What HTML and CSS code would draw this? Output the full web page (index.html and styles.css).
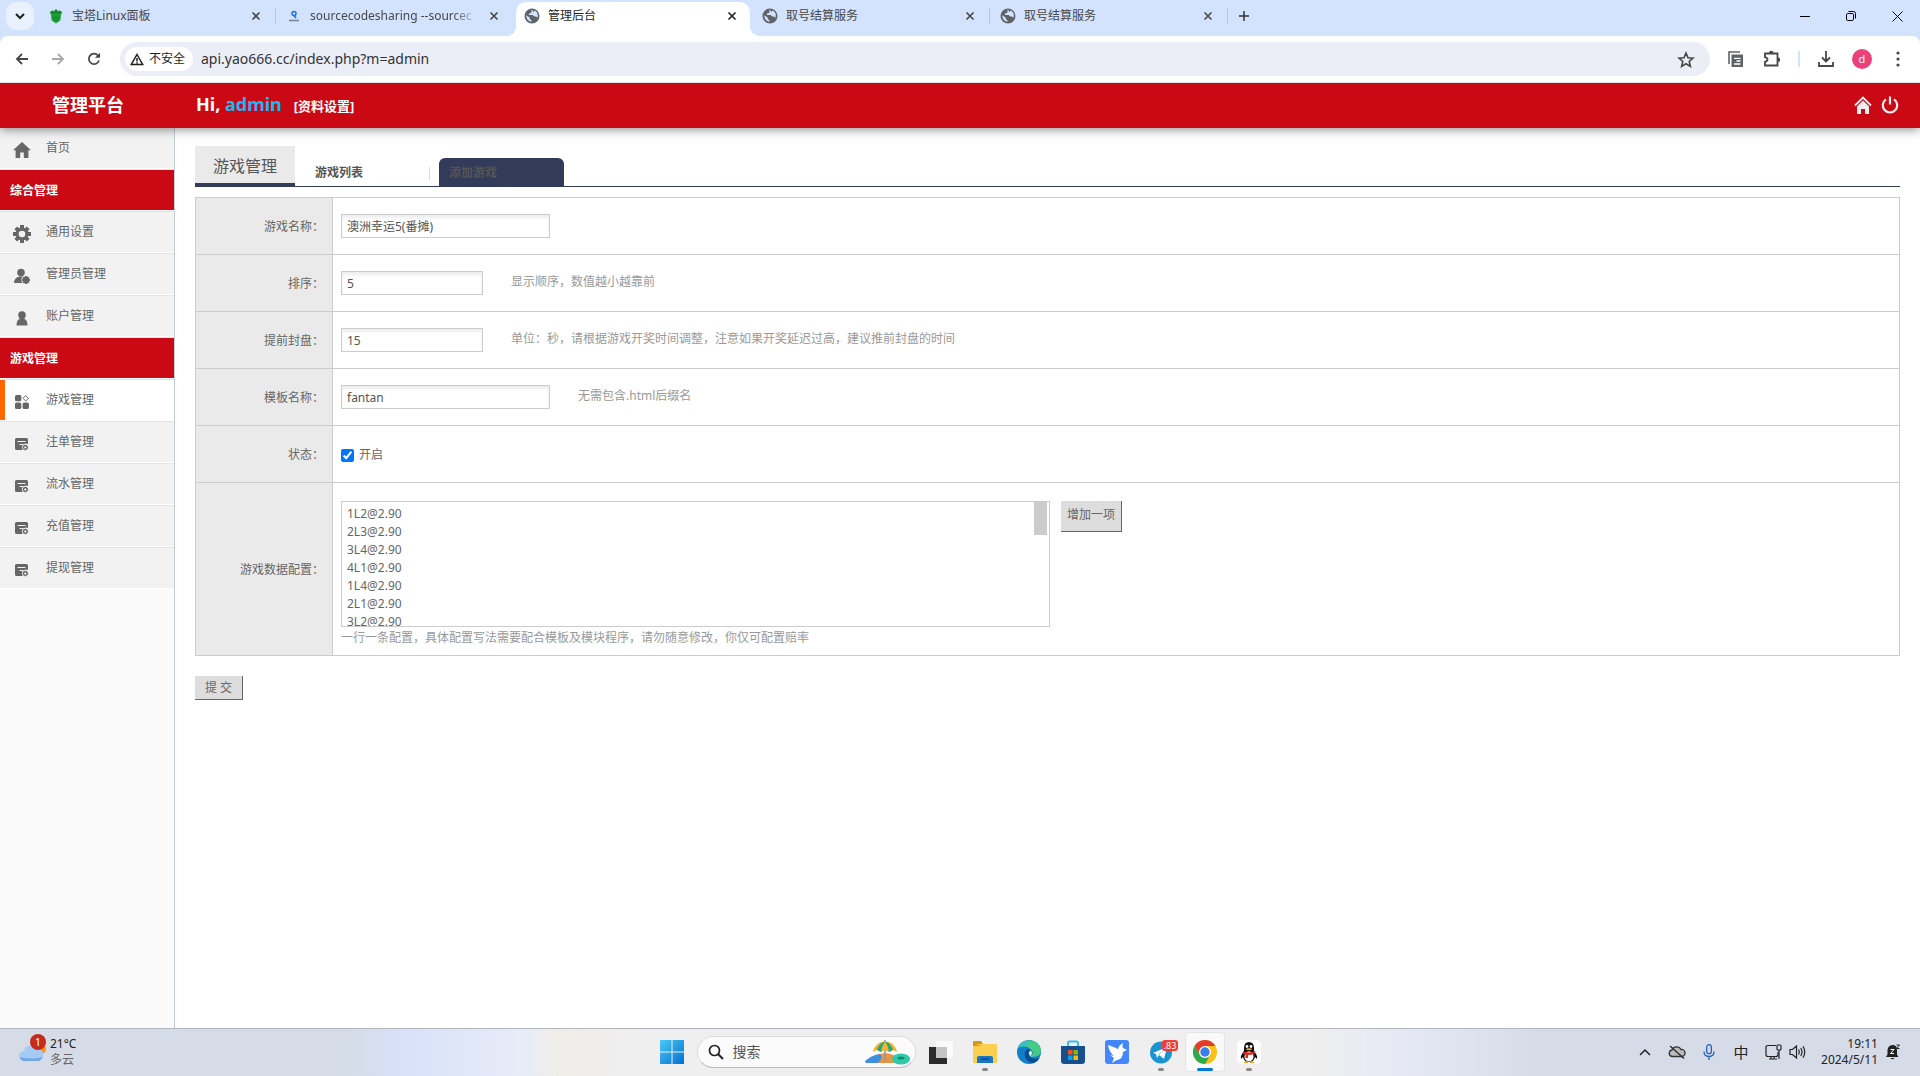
FILE: index.html
```html
<!DOCTYPE html>
<html lang="zh-CN">
<head>
  <meta charset="UTF-8">
  <meta name="viewport" content="width=device-width, initial-scale=1.0">
  <title>管理后台</title>
  <link rel="stylesheet" href="styles.css">
</head>
<body>
  <svg class="defs" aria-hidden="true">
    <symbol id="i-close" viewBox="0 0 10 10"><path d="M1.5 1.5l7 7M8.500 1.500l-7 7" fill="none" stroke="currentColor" stroke-width="1.600"/></symbol>
    <symbol id="i-globe" viewBox="0 0 16 16"><circle cx="8" cy="8" r="7.500" fill="#5f6368"/><path d="M2.300 7.300l3.500 2.400v1.200l1.700 1.500v1.300C4.600 13.500 2.200 11 2.300 7.300zM6.500 2.400L8 3.600 6.400 5.200l-1.500.4v1.300h3.700l1.700 1.600h1.700l1.400 1.300c1.200-3 0-6.200-2.900-7.400L9.200 4.200 8.700 2.200z" fill="#d3e3fd"/></symbol>
    <symbol id="i-home" viewBox="0 0 18 16"><path d="M9 0L0 8.200h2.600V16h4.600v-5.500h3.600V16h4.600V8.200H18z" fill="#666"/></symbol>
    <symbol id="i-list" viewBox="0 0 14 14"><path d="M1.500 1h10q1.500 0 1.500 1.500V7a4 4 0 0 0-5 6H1.500Q0 13 0 11.500v-9Q0 1 1.500 1z" fill="#666"/><path d="M2.500 4.500h8M4.500 7.500h4" stroke="#f2f2f2" stroke-width="1.200"/><path d="M10.300 7.400a3 3 0 1 0 .1 0zM10.300 9v3M9 10.500h2.600" fill="#666" stroke="#f2f2f2" stroke-width=".8"/></symbol>
  </svg>

  <div class="browser">
    <!-- 浏览器标签栏 -->
    <div class="tabstrip">
      <button class="tab-search" aria-label="搜索标签页"><svg width="10" height="7" viewBox="0 0 10 7"><path d="M1 1l4 4 4-4" fill="none" stroke="#1f1f1f" stroke-width="2"/></svg></button>
      <div class="tab">
        <svg width="16" height="16" viewBox="0 0 16 16"><path d="M2.500 5h11l-1.200 7.500L8 15.500l-4.300-3z" fill="#20a53a"/><path d="M1.500 4.500L4 2.500l2 .5 2-2 2 2 2-.5 2.500 2-2.500 1.500h-8z" fill="#1a8a30"/><path d="M6 7v6M8 7v7M10 7v6M4 9.500h8" stroke="#147327" stroke-width=".6"/></svg>
        <span class="tab-title">宝塔Linux面板</span>
        <button class="tab-close" aria-label="关闭"><svg width="10" height="10"><use href="#i-close"/></svg></button>
      </div>
      <div class="tab plain">
        <svg width="16" height="16" viewBox="0 0 16 16"><circle cx="8" cy="5.500" r="2" fill="none" stroke="#1a73e8" stroke-width="1.500"/><path d="M8 7.500l2 2.500" stroke="#1a73e8" stroke-width="1.700"/><path d="M3 12.500h10" stroke="#7d8794" stroke-width="1.600"/></svg>
        <span class="tab-title fade">sourcecodesharing --sourcec</span>
        <button class="tab-close" aria-label="关闭"><svg width="10" height="10"><use href="#i-close"/></svg></button>
      </div>
      <div class="tab active">
        <svg width="16" height="16"><use href="#i-globe"/></svg>
        <span class="tab-title">管理后台</span>
        <button class="tab-close" aria-label="关闭"><svg width="10" height="10"><use href="#i-close"/></svg></button>
      </div>
      <div class="tab">
        <svg width="16" height="16"><use href="#i-globe"/></svg>
        <span class="tab-title">取号结算服务</span>
        <button class="tab-close" aria-label="关闭"><svg width="10" height="10"><use href="#i-close"/></svg></button>
      </div>
      <div class="tab">
        <svg width="16" height="16"><use href="#i-globe"/></svg>
        <span class="tab-title">取号结算服务</span>
        <button class="tab-close" aria-label="关闭"><svg width="10" height="10"><use href="#i-close"/></svg></button>
      </div>
      <button class="new-tab" aria-label="新标签页"><svg width="12" height="12" viewBox="0 0 12 12"><path d="M6 1v10M1 6h10" stroke="#333" stroke-width="1.500"/></svg></button>
      <div class="win-ctrl">
        <button aria-label="最小化"><svg width="10" height="10" viewBox="0 0 10 10"><path d="M0 5.500h10" stroke="#000"/></svg></button>
        <button aria-label="还原"><svg width="10" height="10" viewBox="0 0 10 10"><rect x=".5" y="2.500" width="7" height="7" rx="1.300" fill="none" stroke="#000"/><path d="M2.500 .5H7.500q2 0 2 2v5" fill="none" stroke="#000"/></svg></button>
        <button aria-label="关闭窗口"><svg width="11" height="11" viewBox="0 0 11 11"><path d="M.5 .5l10 10M10.500 .5l-10 10" stroke="#000"/></svg></button>
      </div>
    </div>

    <!-- 地址栏 -->
    <div class="toolbar">
      <button class="tool" aria-label="后退"><svg width="14" height="12" viewBox="0 0 14 12"><path d="M13 6H2M7 1L2 6l5 5" fill="none" stroke="#474747" stroke-width="1.800"/></svg></button>
      <button class="tool" aria-label="前进"><svg width="14" height="12" viewBox="0 0 14 12"><path d="M1 6h11M7 1l5 5-5 5" fill="none" stroke="#a8a8a8" stroke-width="1.800"/></svg></button>
      <button class="tool" aria-label="重新加载"><svg width="14" height="14" viewBox="0 0 14 14"><path d="M12 8.500a5.200 5.200 0 1 1-1-5" fill="none" stroke="#474747" stroke-width="1.800"/><path d="M13 .8v5H8z" fill="#474747"/></svg></button>
      <div class="omnibox">
        <button class="chip"><svg width="14" height="13" viewBox="0 0 14 13"><path d="M7 1.500l5.700 10H1.300zM7 5v3.500M7 9.200v1.400" fill="none" stroke="#1f1f1f" stroke-width="1.500"/></svg>不安全</button>
        <input class="url" type="text" aria-label="地址" value="api.yao666.cc/index.php?m=admin">
        <button class="star" aria-label="收藏"><svg width="18" height="17" viewBox="0 0 18 17"><path d="M9 2l2 4.800 5 .4-3.800 3.300 1.200 4.900L9 12.800l-4.400 2.600 1.200-4.900L2 7.200l5-.4z" fill="none" stroke="#474747" stroke-width="1.600"/></svg></button>
      </div>
      <button class="tool" aria-label="阅读清单"><svg width="16" height="16" viewBox="0 0 16 16"><path d="M1 13V1h11" fill="none" stroke="#5f6368" stroke-width="1.600"/><path d="M3.500 3.500H15V16H3.500z" fill="#5f6368"/><path d="M6 7.300h6.500M6 13h6.500M8.500 10h4" stroke="#fff" stroke-width="1.300"/></svg></button>
      <button class="tool" aria-label="扩展程序"><svg width="18" height="18" viewBox="0 0 18 18"><path d="M2 3.500h12.500V15.500H2v-3.700q2.500-.6 2.500-2.300T2 7.200z" fill="none" stroke="#474747" stroke-width="1.800"/><path d="M6 3a2.200 2.200 0 0 1 4.400 0zM15 7.500a2.200 2.200 0 0 1 0 4.400z" fill="#474747"/></svg></button>
      <span class="tool-sep"></span>
      <button class="tool" aria-label="下载"><svg width="16" height="16" viewBox="0 0 16 16"><path d="M8 0v10M4 6.500l4 4 4-4M1 11v4h14v-4" fill="none" stroke="#474747" stroke-width="1.800"/></svg></button>
      <button class="tool" aria-label="用户"><span class="avatar">d</span></button>
      <button class="tool" aria-label="菜单"><svg width="4" height="16" viewBox="0 0 4 16"><g fill="#474747"><circle cx="2" cy="2" r="1.600"/><circle cx="2" cy="8" r="1.600"/><circle cx="2" cy="14" r="1.600"/></g></svg></button>
    </div>
  </div>

  <header class="header">
    <div class="logo">管理平台</div>
    <div class="hello">Hi, <span class="user">admin</span><a href="#">[资料设置]</a></div>
    <div class="header-icons">
      <a href="#" aria-label="首页"><svg width="18" height="18" viewBox="0 0 18 18"><path d="M1 9.500l8-8 8 8" fill="none" stroke="#eee" stroke-width="1.800"/><path d="M9 4.600l6 6V18h-4v-5H7v5H3v-7.400z" fill="#eee"/></svg></a>
      <a href="#" aria-label="退出"><svg width="18" height="18" viewBox="0 0 18 18"><path d="M5 3.300a7.200 7.200 0 1 0 8 0M9 .5v8" fill="none" stroke="#eee" stroke-width="2.200"/></svg></a>
    </div>
  </header>

  <div class="wrap">
    <nav class="sidebar">
      <a class="item" href="#"><svg width="18" height="16"><use href="#i-home"/></svg>首页</a>
      <h3 class="group">综合管理</h3>
      <a class="item" href="#"><svg width="18" height="18" viewBox="0 0 18 18"><g stroke="#666" stroke-width="4"><path d="M9 0v18M0 9h18M2.800 2.800l12.400 12.400M15.200 2.800L2.800 15.200"/></g><circle cx="9" cy="9" r="6.500" fill="#666"/><circle cx="9" cy="9" r="3.300" fill="#f2f2f2"/></svg>通用设置</a>
      <a class="item" href="#"><svg width="18" height="18" viewBox="0 0 18 18"><circle cx="8" cy="5.500" r="3.800" fill="#666"/><path d="M1 16q0-5 5-6.500h4l1 6.500z" fill="#666"/><circle cx="13" cy="13" r="4.600" fill="#f2f2f2"/><path d="M13 9v8M9 13h8M10.200 10.200l5.600 5.600M15.800 10.200l-5.600 5.600" stroke="#666" stroke-width="2.200"/></svg>管理员管理</a>
      <a class="item" href="#"><svg width="18" height="18" viewBox="0 0 18 18"><circle cx="9" cy="6" r="3.800" fill="#666"/><path d="M6.500 8h5v2q3 1 3 6.500H3.500q0-5.500 3-6.500z" fill="#666"/></svg>账户管理</a>
      <h3 class="group">游戏管理</h3>
      <a class="item current" href="#"><svg width="14" height="14" viewBox="0 0 14 14"><g fill="#666"><rect width="6.300" height="6.300" rx="1.500"/><rect y="7.600" width="6.300" height="6.300" rx="1.500"/><rect x="7.600" y="7.600" width="6.300" height="6.300" rx="1.500"/></g><path d="M10.700 .6l2.700 2.700L10.700 6 8 3.300z" fill="none" stroke="#666"/></svg>游戏管理</a>
      <a class="item" href="#"><svg width="14" height="14"><use href="#i-list"/></svg>注单管理</a>
      <a class="item" href="#"><svg width="14" height="14"><use href="#i-list"/></svg>流水管理</a>
      <a class="item" href="#"><svg width="14" height="14"><use href="#i-list"/></svg>充值管理</a>
      <a class="item" href="#"><svg width="14" height="14"><use href="#i-list"/></svg>提现管理</a>
    </nav>

    <main class="content">
      <div class="page-head">
        <h2>游戏管理</h2>
        <a class="page-tab" href="#">游戏列表</a>
        <a class="page-tab on" href="#">添加游戏</a>
      </div>

      <form>
        <table class="form">
          <tr>
            <th><label for="name">游戏名称：</label></th>
            <td><input class="text" type="text" id="name" value="澳洲幸运5(番摊)"></td>
          </tr>
          <tr>
            <th><label for="sort">排序：</label></th>
            <td><input class="text short" type="text" id="sort" value="5"><span class="tip">显示顺序，数值越小越靠前</span></td>
          </tr>
          <tr>
            <th><label for="ahead">提前封盘：</label></th>
            <td><input class="text short" type="text" id="ahead" value="15"><span class="tip">单位：秒，请根据游戏开奖时间调整，注意如果开奖延迟过高，建议推前封盘的时间</span></td>
          </tr>
          <tr>
            <th><label for="tpl">模板名称：</label></th>
            <td><input class="text" type="text" id="tpl" value="fantan"><span class="tip">无需包含.html后缀名</span></td>
          </tr>
          <tr>
            <th>状态：</th>
            <td><label class="check"><input type="checkbox" checked>开启</label></td>
          </tr>
          <tr class="data">
            <th><label for="data">游戏数据配置：</label></th>
            <td>
              <div class="data-row">
                <div class="area">
                  <textarea id="data">1L2@2.90
2L3@2.90
3L4@2.90
4L1@2.90
1L4@2.90
2L1@2.90
3L2@2.90</textarea>
                  <span class="thumb"></span>
                </div>
                <button type="button" class="btn add">增加一项</button>
              </div>
              <p class="note">一行一条配置，具体配置写法需要配合模板及模块程序，请勿随意修改，你仅可配置赔率</p>
            </td>
          </tr>
        </table>
        <button type="button" class="btn submit">提 交</button>
      </form>
    </main>
  </div>

  <!-- 任务栏 -->
  <footer class="taskbar">
    <div class="weather">
      <svg width="28" height="30" viewBox="0 0 28 30"><circle cx="23" cy="16" r="5" fill="#f5931f"/><path d="M6 28a5 5 0 0 1 0-10 7 7 0 0 1 13-2 6 6 0 0 1 1 12z" fill="#a5cbf5"/><path d="M2 24q11 3 22 0-1 4-4 4H6q-3 0-4-4z" fill="#6fa6e4"/><circle cx="20" cy="9" r="8" fill="#c42b1c"/><text x="20" y="13" class="badge-text">1</text></svg>
      <div class="two-line"><span class="dark">21°C</span><span>多云</span></div>
    </div>
    <div class="apps">
      <button class="app" aria-label="开始"><svg width="24" height="24" viewBox="0 0 24 24"><defs><linearGradient id="win" x1="0" y1="0" x2="1" y2="1"><stop offset="0" stop-color="#4cc9f7"/><stop offset="1" stop-color="#006fd0"/></linearGradient></defs><path d="M0 0h11.500v11.500H0zM12.500 0H24v11.500H12.500zM0 12.500h11.500V24H0zM12.500 12.500H24V24H12.500z" fill="url(#win)"/></svg></button>
      <label class="search">
        <svg width="16" height="16" viewBox="0 0 16 16"><circle cx="6.500" cy="6.500" r="5" fill="none" stroke="#222" stroke-width="1.700"/><path d="M10 10l5 5" stroke="#222" stroke-width="2"/></svg>
        <input type="text" aria-label="搜索" value="搜索">
        <svg width="46" height="26" viewBox="0 0 46 26"><path d="M1 24q6-9 19-10 12 1 18 10z" fill="#e8954a"/><path d="M0 22q7-6 15-7 4 3-2 9H2q-2 0-2-2z" fill="#3f8fe0"/><path d="M20 1v22" stroke="#999" stroke-width="1.500"/><path d="M8 13Q10 3 20 2.500 30 3 32 13l-4-2-4 2-4-2-4 2-4-2z" fill="#f3b22f"/><path d="M12 11q2-7 8-8.500 6 1.500 8 8.500l-4 2q-1-7-4-10.500-3 3.500-4 10.500z" fill="#23a67c"/><ellipse cx="36" cy="20" rx="9" ry="5.500" fill="#2fc9a5"/><ellipse cx="36" cy="19" rx="3.500" ry="1.500" fill="#128a78"/></svg>
      </label>
      <button class="app" aria-label="任务视图"><svg width="24" height="24" viewBox="0 0 24 24"><path d="M7 1h17v17H7z" fill="#fafafa"/><path d="M0 7h18v17H0z" fill="#2b2b2b"/><path d="M7 7h11v11H7z" fill="#c4c4c4"/></svg></button>
      <button class="app running" aria-label="文件资源管理器"><svg width="24" height="24" viewBox="0 0 24 24"><path d="M0 2q0-1 1-1h7l2 3v4H0z" fill="#d9950f"/><path d="M2 4h21q1 0 1 1v17q0 1-1 1H1q-1 0-1-1V6h9z" fill="#fcd04e"/><path d="M4 23v-5q0-2 2-2h12q2 0 2 2v5z" fill="#1976c5"/><path d="M8 19h8" stroke="#0d559b" stroke-width="2"/></svg></button>
      <button class="app" aria-label="Edge"><svg width="24" height="24" viewBox="0 0 24 24"><circle cx="12" cy="12" r="12" fill="#1280c9"/><path d="M1 8C4 1 10-1 16 1c7 2 9 8 7.500 12-1 3-5 4.500-8 3.500-2-1 1-2 0-5C13 7 7 5 1 8z" fill="#43ca86"/><path d="M1 8C4 2 10 0 14 2 8 2 8 6 11 7 7 5 4 6 1 8z" fill="#3abcd9"/><path d="M9 10c-3 4-1 11 6 13 3 0 6-2 7.500-5-5 2-11 0-11-5 0-2 1-3 2-3q-2-2-4.500 0z" fill="#0b4b92"/><path d="M12 13q1-3 2-2 2 2 0 4 0 1 2 2-4-1-4-4z" fill="#efefef"/></svg></button>
      <button class="app" aria-label="Microsoft Store"><svg width="24" height="24" viewBox="0 0 24 24"><path d="M7 6V3q0-1.500 1.500-1.500h7Q17 1.500 17 3v3" fill="none" stroke="#38bdf0" stroke-width="2"/><path d="M0 6h24v15q0 3-3 3H3q-3 0-3-3z" fill="#174f8d"/><path d="M7 10h4.500v4.500H7z" fill="#f25022"/><path d="M12.500 10H17v4.500h-4.500z" fill="#7fba00"/><path d="M7 15.500h4.500V20H7z" fill="#00a4ef"/><path d="M12.500 15.500H17V20h-4.500z" fill="#ffb900"/></svg></button>
      <button class="app" aria-label="飞鸟"><svg width="24" height="24" viewBox="0 0 24 24"><rect width="24" height="24" rx="3" fill="#4486ff"/><path d="M3 5l8 3q1 1 2 1 1-4 5-6-1 4 0 5l4 2-4 2q0 7-6 8l-2 1-3 2 2-5-4-3 4 1Q4 12 3 5z" fill="#fff"/></svg></button>
      <button class="app running" aria-label="Telegram"><svg width="34" height="24" viewBox="0 0 34 24"><circle cx="17" cy="12.500" r="11" fill="#1c93d1"/><path d="M9 13l14-6-3 12-5-4-2 3-1-4z" fill="#fff"/><path d="M14 14l7-5-6 6z" fill="#a8cfe8"/><rect x="18" y="0" width="16" height="11" rx="3" fill="#f23c34"/><text x="26" y="9" class="badge-text small">.83</text></svg></button>
      <button class="app running focus" aria-label="Chrome"><svg width="24" height="24" viewBox="0 0 24 24"><circle cx="12" cy="12" r="12" fill="#fbc116"/><path d="M1.600 6A12 12 0 0 1 22.400 6H12l-5.200 9z" fill="#e33b2e"/><path d="M1.600 6A12 12 0 0 0 12 24l5.200-9H6.800z" fill="#2da94f"/><circle cx="12" cy="12" r="6" fill="#fff"/><circle cx="12" cy="12" r="4.700" fill="#3b7de8"/></svg></button>
      <button class="app running" aria-label="QQ"><svg width="24" height="24" viewBox="0 0 24 24"><rect width="24" height="24" rx="5" fill="#fff"/><path d="M12 2q5 0 5 6v3q4 5 3 8l-2-2q-1 5-6 5t-6-5l-2 2q-1-3 3-8V8q0-6 5-6z" fill="#111"/><ellipse cx="12" cy="16.500" rx="4.500" ry="5" fill="#fff"/><circle cx="10" cy="6.500" r="1.400" fill="#fff"/><circle cx="14" cy="6.500" r="1.400" fill="#fff"/><ellipse cx="12" cy="9.300" rx="3" ry="1" fill="#f7a11b"/><path d="M6 11q6 3 12 0v2.500q-4 1.500-7 1.500v3H8.500v-3.500L6 13.500z" fill="#e2231a"/><path d="M7 21.500h4v1.500H7zM13 21.500h4v1.500h-4z" fill="#f7a11b"/></svg></button>
    </div>
    <div class="tray">
      <button aria-label="显示隐藏的图标"><svg width="12" height="8" viewBox="0 0 12 8"><path d="M1 7l5-5 5 5" fill="none" stroke="#222" stroke-width="1.500"/></svg></button>
      <button aria-label="OneDrive"><svg width="18" height="14" viewBox="0 0 18 14"><path d="M4 11.500a3.300 3.300 0 0 1 0-6.500 5 5 0 0 1 9-.5 3.500 3.500 0 0 1 1 7z" fill="#bbb" stroke="#333" stroke-width="1.300"/><path d="M2 1l14 12.500" stroke="#333" stroke-width="1.500"/></svg></button>
      <button aria-label="麦克风"><svg width="12" height="16" viewBox="0 0 12 16"><rect x="3.700" y=".7" width="4.600" height="9" rx="2.300" fill="none" stroke="#2563b5" stroke-width="1.300"/><path d="M1 7.500q0 5 5 5t5-5M6 12.500V16" fill="none" stroke="#2563b5" stroke-width="1.300"/></svg></button>
      <button class="ime">中</button>
      <button aria-label="网络"><svg width="17" height="16" viewBox="0 0 17 16"><path d="M11 1.500H3q-2 0-2 2v7q0 2 2 2h8q2 0 2-2V8M4 15h8M6 12.500V15M9 12.500V15" fill="none" stroke="#222" stroke-width="1.200"/><rect x="12" y="1" width="4" height="5" rx="1" fill="none" stroke="#222" stroke-width="1.200"/><path d="M14 6v9" stroke="#222" stroke-width="1.200"/></svg></button>
      <button class="volume" aria-label="音量"><svg width="17" height="14" viewBox="0 0 17 14"><path d="M1 4.500h2.500L7.500 1v12L3.500 9.500H1zM9.500 4.500q1.500 2.500 0 5M11.700 3q2.600 4 0 8M14 1.300q3.500 5.700 0 11.400" fill="none" stroke="#222" stroke-width="1.200"/></svg></button>
      <div class="two-line clock"><span>19:11</span><span>2024/5/11</span></div>
      <button class="bell" aria-label="通知"><svg width="14" height="16" viewBox="0 0 14 16"><path d="M0 13l1.500-2.500V6q.5-4.500 5-5Q11 1 11 6v4.500L12.500 13zM4.500 14h4q-2 2.500-4 0z" fill="#222"/><path d="M4.500 5.500h3.500L4.500 9.500H8" fill="none" stroke="#fff"/><path d="M10.500 1h3l-3 3.500h3" fill="none" stroke="#222"/></svg></button>
    </div>
  </footer>
</body>
</html>
```

FILE: styles.css
```css
* {
  box-sizing: border-box;
}
body {
  margin: 0;
  min-height: 100vh;
  display: flex;
  flex-direction: column;
  font-family: "Noto Sans", "Noto Sans CJK SC", sans-serif;
  font-size: 12px;
  line-height: 18px;
  color: #666;
  background: #fff;
}
button, input, textarea {
  font: inherit;
  color: inherit;
}
button {
  border: 0;
  padding: 0;
  background: none;
}
a {
  color: inherit;
  text-decoration: none;
}
svg {
  display: block;
  flex: none;
}
.defs {
  position: absolute;
  width: 0;
  height: 0;
}

/* 浏览器标签栏 */
.browser {
  position: relative;
  z-index: 2;
  background: #d3e3fd;
}
.tabstrip {
  height: 36px;
  display: flex;
  align-items: flex-start;
}
.tab-search {
  width: 28px;
  height: 28px;
  margin: 2px 4px 0 6px;
  border-radius: 10px;
  background: #e9f1fe;
  display: flex;
  align-items: center;
  justify-content: center;
}
.tab {
  width: 238px;
  height: 32px;
  padding: 0 12px 0 10px;
  display: flex;
  align-items: center;
  gap: 8px;
  color: #474747;
  background: linear-gradient(#a8c7fa, #a8c7fa) right 8px / 1px 16px no-repeat;
}
.tab.plain {
  background: none;
}
.tab.active {
  position: relative;
  width: 234px;
  height: 34px;
  margin: 2px 2px 0;
  padding: 0 10px 6px 8px;
  color: #1f1f1f;
  background: #fff;
  border-radius: 10px 10px 0 0;
}
/* 当前标签底部的圆角 */
.tab.active::before,
.tab.active::after {
  content: "";
  position: absolute;
  bottom: 0;
  width: 10px;
  height: 10px;
}
.tab.active::before {
  left: -10px;
  background: radial-gradient(circle at 0 0, transparent 10px, #fff 10px);
}
.tab.active::after {
  right: -10px;
  background: radial-gradient(circle at 100% 0, transparent 10px, #fff 10px);
}
.tab-title {
  flex: 1;
  white-space: nowrap;
}
.tab-title.fade {
  -webkit-mask-image: linear-gradient(to right, #000 85%, transparent);
  mask-image: linear-gradient(to right, #000 85%, transparent);
}
.tab-close {
  width: 16px;
  height: 16px;
  display: flex;
  align-items: center;
  justify-content: center;
}
.new-tab {
  width: 32px;
  height: 32px;
  display: flex;
  align-items: center;
  justify-content: center;
}
.win-ctrl {
  margin-left: auto;
  display: flex;
}
.win-ctrl button {
  width: 46px;
  height: 32px;
  display: flex;
  align-items: center;
  justify-content: center;
}

/* 地址栏 */
.toolbar {
  height: 47px;
  padding: 0 4px;
  display: flex;
  align-items: center;
  border-bottom: 1px solid #dcdfe4;
  border-radius: 8px 8px 0 0;
  background: #fff;
}
.tool {
  width: 36px;
  height: 34px;
  display: flex;
  align-items: center;
  justify-content: center;
}
.omnibox {
  flex: 1;
  height: 34px;
  margin: 0 8px;
  padding: 0 15px 0 5px;
  display: flex;
  align-items: center;
  border-radius: 17px;
  background: #ebeef7;
}
.chip {
  height: 24px;
  padding: 0 8px 0 5px;
  display: flex;
  align-items: center;
  gap: 5px;
  border-radius: 12px;
  background: #fff;
  color: #1f1f1f;
}
.url {
  flex: 1;
  margin-left: 8px;
  padding: 0;
  border: 0;
  background: none;
  font-size: 14px;
  color: #333;
}
.tool-sep {
  width: 2px;
  height: 16px;
  margin: 0 8px;
  background: #d3e3fd;
}
.avatar {
  width: 20px;
  height: 20px;
  border-radius: 50%;
  background: #ec407a;
  color: #fff;
  font-size: 11px;
  line-height: 20px;
}

/* 顶部 */
.header {
  position: relative;
  z-index: 1;
  height: 45px;
  padding-bottom: 2px;
  display: flex;
  align-items: center;
  background: #ca0915;
  box-shadow: 0 1px 10px rgba(0, 0, 0, 0.5);
  color: #fff;
  font-size: 18px;
  font-weight: bold;
}
.logo {
  width: 196px;
  padding-left: 52px;
}
.user {
  color: #1eb5f5;
}
.hello a {
  margin-left: 12px;
  font-size: 13px;
}
.header-icons {
  margin-left: auto;
  padding-right: 21px;
  display: flex;
  gap: 9px;
}

/* 左侧菜单 */
.wrap {
  flex: 1;
  display: flex;
}
.sidebar {
  width: 175px;
  flex: none;
  margin-top: -1px;
  background: #fafafa;
  border-right: 1px solid #c1cfd8;
}
.item, .group {
  height: 42px;
  margin: 0;
  border-top: 1px solid #e3e3e3;
  border-bottom: 1px solid #fff;
}
.item {
  display: flex;
  align-items: center;
  background: #f2f2f2;
}
.item svg {
  width: 18px;
  margin: 4px 15px 0 13px;
}
.item.current {
  background: linear-gradient(#f60, #f60) left / 5px 100% no-repeat #fff;
}
.group {
  padding-left: 10px;
  background: #ca0915;
  color: #fff;
  font-size: 12px;
  line-height: 42px;
}

/* 右侧内容 */
.content {
  flex: 1;
  padding: 18px 20px;
}
.page-head {
  height: 41px;
  display: flex;
  align-items: flex-end;
  background: linear-gradient(#323b59, #323b59) bottom / 100% 1px no-repeat;
}
.page-head h2 {
  width: 100px;
  height: 41px;
  margin: 0;
  border-bottom: 4px solid #323b59;
  background: #eaeaea;
  color: #555;
  font-size: 16px;
  font-weight: normal;
  line-height: 40px;
  text-align: center;
}
.page-tab {
  width: 125px;
  height: 29px;
  margin-left: 10px;
  padding: 0 10px;
  background: linear-gradient(#cfe3d5, #cfe3d5) right 9px / 1px 13px no-repeat;
  color: #555;
  font-weight: bold;
  line-height: 29px;
}
.page-tab.on {
  margin-left: 9px;
  border-radius: 6px 6px 0 0;
  background: #323b59;
}
.form {
  width: 100%;
  margin-top: 10px;
  border-collapse: collapse;
}
.form th, .form td {
  height: 57px;
  padding: 0 8px;
  border: 1px solid #ccc;
}
.form th {
  width: 137px;
  padding-top: 2px;
  background: #eaeaea;
  font-weight: normal;
  text-align: right;
}
.text {
  width: 209px;
  height: 24px;
  padding: 0 5px;
  border: 1px solid #ccc;
  box-shadow: inset 0 3px 3px #eee;
  color: #555;
  vertical-align: middle;
}
.text.short {
  width: 142px;
}
.tip {
  margin-left: 28px;
  color: #999;
}
.check {
  padding-top: 2px;
  display: flex;
  align-items: center;
  gap: 5px;
}
.check input {
  width: 13px;
  height: 13px;
  margin: 0;
  accent-color: #0075ff;
}
.form .data td {
  padding: 18px 8px 8px;
}
.data-row {
  display: flex;
  align-items: flex-start;
  gap: 11px;
}
.area {
  position: relative;
  width: 42%;
  max-width: 709px;
  flex: 1 0 auto;
}
.area textarea {
  display: block;
  width: 100%;
  height: 126px;
  padding: 3px 5px;
  border: 1px solid #ccc;
  resize: none;
  overflow: hidden;
}
.thumb {
  position: absolute;
  top: 1px;
  right: 3px;
  width: 13px;
  height: 33px;
  background: #ccc;
}
.note {
  margin: 2px 0 0;
  color: #999;
}
.btn {
  border: 0 solid #666;
  border-width: 0 1px 1px 0;
  background: #ddd;
}
.btn.add {
  height: 31px;
  padding: 0 6px 3px;
}
.btn.submit {
  height: 24px;
  margin-top: 20px;
  padding: 0 10px;
}

/* 任务栏 */
.taskbar {
  height: 48px;
  padding-bottom: 1px;
  display: grid;
  grid-template-columns: 1fr auto 1fr;
  align-items: center;
  border-top: 1px solid #b4b6bd;
  background: linear-gradient(to right, #d5dce8 18%, #d7e1f8 21%, #e8ecf9 27%, #f0ede9 29%, #efefef 33%, #efefef 68%, #e6e9f5 73%, #d5dce8 80%);
  font-size: 12px;
  line-height: 16px;
}
.weather, .apps, .tray {
  display: flex;
  align-items: center;
}
.weather {
  padding-left: 18px;
  gap: 4px;
}
.weather > svg {
  margin-top: -8px;
}
.two-line {
  display: flex;
  flex-direction: column;
}
.dark {
  color: #222;
}
.badge-text {
  fill: #fff;
  font-size: 11px;
  text-anchor: middle;
}
.badge-text.small {
  font-size: 9px;
}
.app {
  position: relative;
  width: 44px;
  height: 46px;
  display: flex;
  align-items: center;
  justify-content: center;
}
.app.focus {
  width: 40px;
  height: 40px;
  margin: 0 2px;
  border: 1px solid #e4e4e4;
  border-radius: 4px;
  background: #f9f9f9;
}
.app.running::after {
  content: "";
  position: absolute;
  bottom: 4px;
  width: 6px;
  height: 3px;
  border-radius: 2px;
  background: #888;
}
.app.focus::after {
  bottom: 0;
  width: 16px;
  background: #0078d4;
}
.search {
  width: 219px;
  height: 32px;
  margin: 0 3px;
  padding: 0 4px 0 10px;
  display: flex;
  align-items: center;
  gap: 9px;
  border: 1px solid #ddd;
  border-bottom-color: #bbb;
  border-radius: 16px;
  background: #fbfbfb;
}
.search input {
  flex: 1;
  min-width: 0;
  padding: 0;
  border: 0;
  background: none;
  color: #555;
  font-size: 14px;
}
.tray {
  justify-content: flex-end;
  padding-right: 20px;
  color: #222;
}
.tray button {
  width: 32px;
  height: 40px;
  display: flex;
  align-items: center;
  justify-content: center;
}
.tray .ime {
  font-size: 15px;
}
.tray .volume {
  width: 17px;
}
.clock {
  width: 72px;
  text-align: right;
}
.tray .bell {
  width: 14px;
  margin-left: 8px;
}
```
